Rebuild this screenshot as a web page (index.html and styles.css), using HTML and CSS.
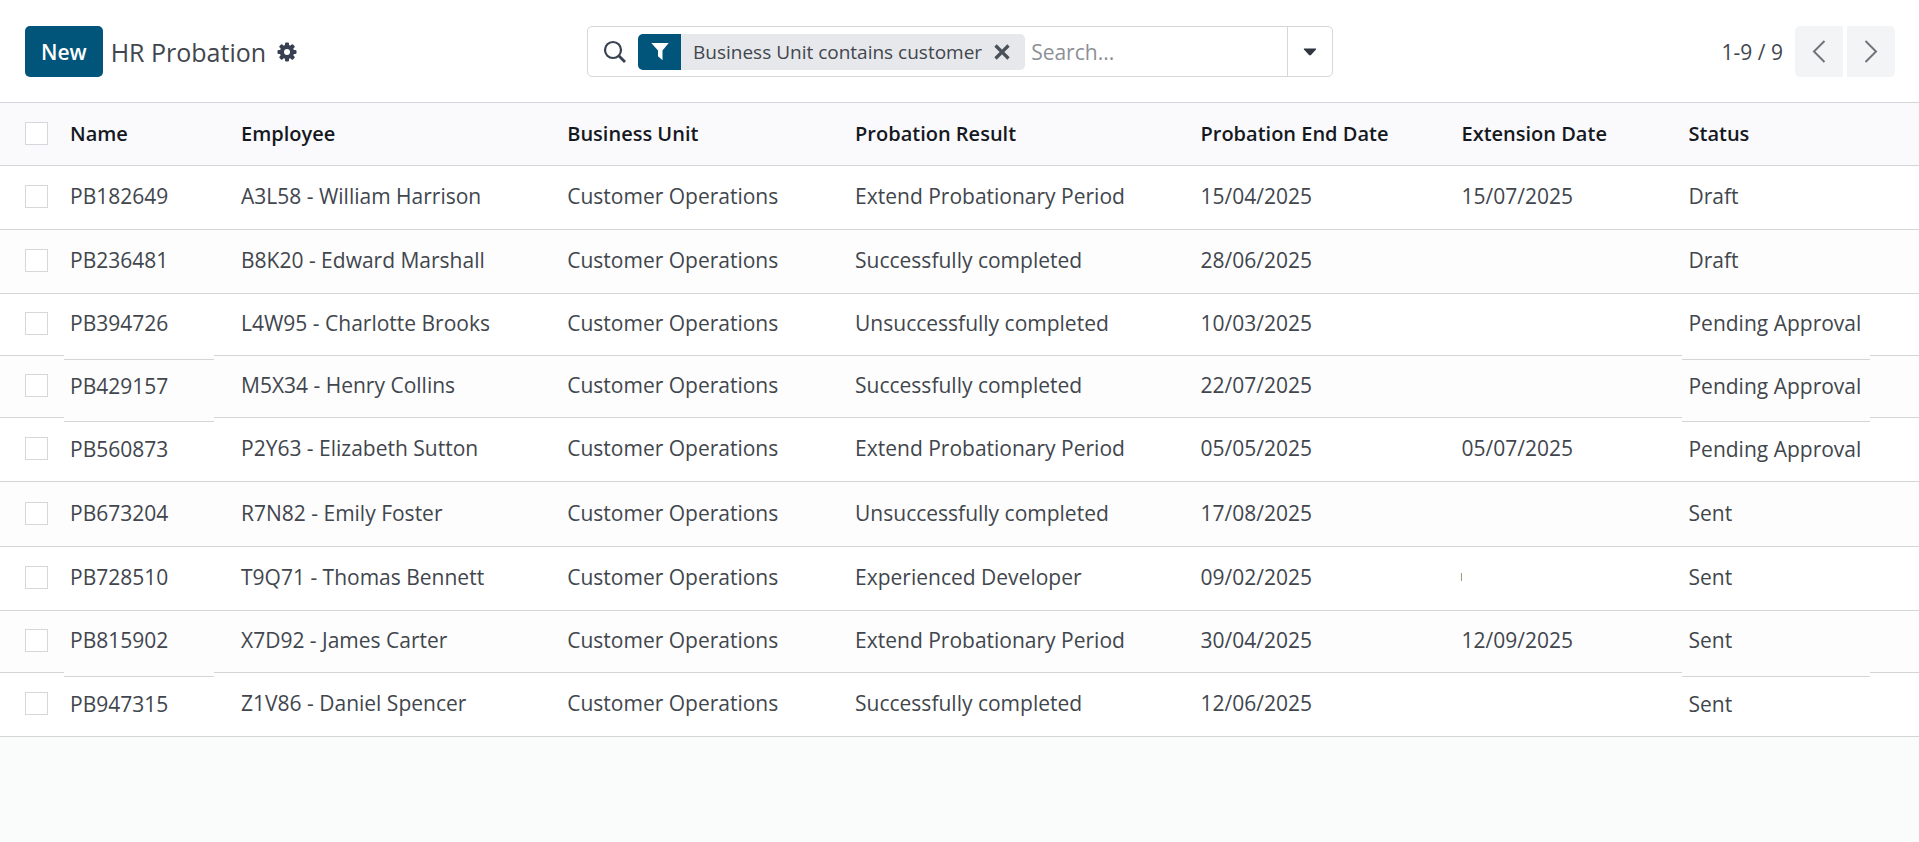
FILE: index.html
```html
<!DOCTYPE html>
<html lang="en">
<head>
<meta charset="utf-8">
<meta name="viewport" content="width=device-width, initial-scale=1">
<title>HR Probation</title>
<link rel="stylesheet" href="styles.css">
</head>
<body>
<header class="control-panel">
  <div class="breadcrumb">
    <button class="btn-new" type="button">New</button>
    <h1 class="title">HR Probation</h1>
    <button class="icon-btn" type="button" aria-label="Settings">
      <svg width="20" height="20" viewBox="0 0 20 20"><g fill="#374151"><rect x="8" y="0.5" width="4" height="19" rx="1"/><rect x="8" y="0.5" width="4" height="19" rx="1" transform="rotate(45 10 10)"/><rect x="8" y="0.5" width="4" height="19" rx="1" transform="rotate(90 10 10)"/><rect x="8" y="0.5" width="4" height="19" rx="1" transform="rotate(135 10 10)"/><circle cx="10" cy="10" r="7.2"/></g><circle cx="10" cy="10" r="3" fill="#fff"/></svg>
    </button>
  </div>
  <div class="search" role="search">
    <svg class="search-icon" width="24" height="24" viewBox="0 0 24 24" fill="none" stroke="#374151" stroke-width="2.2"><circle cx="10" cy="10" r="8"/><path d="M15.8 15.8 22 22" stroke-width="2.8"/></svg>
    <div class="facet">
      <span class="facet-icon"><svg width="18" height="19" viewBox="0 0 18 19"><path d="M0.3 1h17.4L11.5 8.6V18.2L7 14.2V8.6Z" fill="#fff"/></svg></span>
      <span class="facet-label">Business Unit contains customer</span>
      <button class="facet-remove" type="button" aria-label="Remove filter"><svg width="16" height="16" viewBox="0 0 16 16" stroke="#4b5159" stroke-width="3.2"><path d="M1.5 1.5 14.5 14.5M14.5 1.5 1.5 14.5"/></svg></button>
    </div>
    <input class="search-input" type="text" placeholder="Search..." aria-label="Search">
    <button class="search-toggle" type="button" aria-label="Search options"><svg width="14" height="8" viewBox="0 0 14 8"><path d="M1.4 0.5h11.2q1.2 0 .4 1L8 7q-1 .9-2 0L1 1.500q-.8-1 .4-1Z" fill="#2f3640"/></svg></button>
  </div>
  <nav class="pager" aria-label="Pager">
    <span class="pager-count">1-9 / 9</span>
    <button class="pager-btn prev" type="button" aria-label="Previous"><svg width="14" height="23" viewBox="0 0 14 23" fill="none" stroke="#707478" stroke-width="2"><path d="M12.500 1 2 11.500 12.500 22"/></svg></button>
    <button class="pager-btn next" type="button" aria-label="Next"><svg width="14" height="23" viewBox="0 0 14 23" fill="none" stroke="#707478" stroke-width="2"><path d="M1.500 1 12 11.500 1.500 22"/></svg></button>
  </nav>
</header>
<main>
<table class="list">
  <colgroup><col class="c-check"><col class="c-name"><col class="c-employee"><col class="c-unit"><col class="c-result"><col class="c-end"><col class="c-ext"><col class="c-status"></colgroup>
  <thead>
    <tr><th class="check"><input type="checkbox" aria-label="Select all"></th><th>Name</th><th>Employee</th><th>Business Unit</th><th>Probation Result</th><th>Probation End Date</th><th>Extension Date</th><th>Status</th></tr>
  </thead>
  <tbody>
    <tr><td class="check"><input type="checkbox" aria-label="Select PB182649"></td><td>PB182649</td><td>A3L58 - William Harrison</td><td>Customer Operations</td><td>Extend Probationary Period</td><td>15/04/2025</td><td>15/07/2025</td><td>Draft</td></tr>
    <tr><td class="check"><input type="checkbox" aria-label="Select PB236481"></td><td>PB236481</td><td>B8K20 - Edward Marshall</td><td>Customer Operations</td><td>Successfully completed</td><td>28/06/2025</td><td></td><td>Draft</td></tr>
    <tr class="short"><td class="check"><input type="checkbox" aria-label="Select PB394726"></td><td>PB394726</td><td>L4W95 - Charlotte Brooks</td><td>Customer Operations</td><td>Unsuccessfully completed</td><td>10/03/2025</td><td></td><td>Pending Approval</td></tr>
    <tr class="short"><td class="check"><input type="checkbox" aria-label="Select PB429157"></td><td class="low">PB429157</td><td>M5X34 - Henry Collins</td><td>Customer Operations</td><td>Successfully completed</td><td>22/07/2025</td><td></td><td class="low wide">Pending Approval</td></tr>
    <tr><td class="check"><input type="checkbox" aria-label="Select PB560873"></td><td class="low">PB560873</td><td>P2Y63 - Elizabeth Sutton</td><td>Customer Operations</td><td>Extend Probationary Period</td><td>05/05/2025</td><td>05/07/2025</td><td class="low wide">Pending Approval</td></tr>
    <tr class="tall"><td class="check"><input type="checkbox" aria-label="Select PB673204"></td><td>PB673204</td><td>R7N82 - Emily Foster</td><td>Customer Operations</td><td>Unsuccessfully completed</td><td>17/08/2025</td><td></td><td>Sent</td></tr>
    <tr><td class="check"><input type="checkbox" aria-label="Select PB728510"></td><td>PB728510</td><td>T9Q71 - Thomas Bennett</td><td>Customer Operations</td><td>Experienced Developer</td><td>09/02/2025</td><td><span class="mark"></span></td><td>Sent</td></tr>
    <tr class="short"><td class="check"><input type="checkbox" aria-label="Select PB815902"></td><td>PB815902</td><td>X7D92 - James Carter</td><td>Customer Operations</td><td>Extend Probationary Period</td><td>30/04/2025</td><td>12/09/2025</td><td>Sent</td></tr>
    <tr><td class="check"><input type="checkbox" aria-label="Select PB947315"></td><td class="low">PB947315</td><td>Z1V86 - Daniel Spencer</td><td>Customer Operations</td><td>Successfully completed</td><td>12/06/2025</td><td></td><td class="low wide">Sent</td></tr>
  </tbody>
</table>
</main>
</body>
</html>
```

FILE: styles.css
```css
* { box-sizing: border-box; }

body {
  margin: 0;
  background: #fafbfb;
  color: #41464d;
  font-family: "Open Sans", "Noto Sans", sans-serif;
  font-size: 21px;
  line-height: 28px;
}

button, input { font: inherit; color: inherit; margin: 0; }
button { border: 0; padding: 0; background: none; cursor: pointer; }
svg { display: block; flex: none; }

.control-panel {
  display: grid;
  grid-template-columns: 1fr minmax(0, 746px) 1fr;
  align-items: center;
  padding: 26px 24px 25px 25px;
  background: #fff;
}

.breadcrumb { display: flex; align-items: center; gap: 8px; }
.btn-new {
  height: 51px;
  padding: 0 16px;
  border-radius: 5px;
  background: #01557a;
  color: #fff;
  font-weight: 600;
}
.title { margin: 0; font-size: 25px; font-weight: 400; white-space: nowrap; }
.icon-btn { padding: 3px; }

.search {
  display: flex;
  align-items: center;
  height: 51px;
  padding-left: 15px;
  border: 1px solid #d5d7da;
  border-radius: 5px;
  background: #fff;
}
.facet {
  display: flex;
  align-items: center;
  height: 36px;
  margin-left: 11px;
  border-radius: 5px;
  overflow: hidden;
  background: #e7e8eb;
}
.facet-icon {
  display: flex;
  align-items: center;
  justify-content: center;
  width: 43px;
  height: 100%;
  background: #01557a;
}
.facet-label { padding: 0 12px; font-size: 19px; white-space: nowrap; }
.facet-remove { padding-right: 15px; }
.search-input {
  flex: 1;
  min-width: 0;
  height: 100%;
  padding: 0 6px;
  border: 0;
  outline: 0;
  background: none;
}
.search-input::placeholder { color: #8c9095; opacity: 1; }
.search-toggle {
  display: flex;
  align-items: center;
  justify-content: center;
  width: 45px;
  height: 100%;
  border-left: 1px solid #d5d7da;
}

.pager { display: flex; align-items: center; justify-content: flex-end; gap: 4px; }
.pager-count { margin-right: 8px; }
.pager-btn {
  display: flex;
  align-items: center;
  justify-content: center;
  width: 48px;
  height: 51px;
  background: #f3f4f5;
}
.prev { border-radius: 5px 0 0 5px; }
.next { border-radius: 0 5px 5px 0; }

.list {
  width: 100%;
  table-layout: fixed;
  border-collapse: separate;
  border-spacing: 0;
  border-top: 1px solid #d3d6d9;
}
.c-check { width: 64px; }
.c-name { width: 171px; }
.c-employee { width: 17%; }
.c-unit { width: 15%; }
.c-result { width: 18%; }
.c-end { width: 261px; }
.c-ext { width: 227px; }

.list th, .list td {
  position: relative;
  height: 64px;
  padding: 0 0 3px 6px;
  border-bottom: 1px solid #d3d6d9;
  text-align: left;
  vertical-align: middle;
  white-space: nowrap;
}
.list th {
  height: 63px;
  padding-bottom: 0;
  background: #fafafc;
  color: #15191f;
  font-size: 20px;
  font-weight: 600;
}
.list td { background: #fff; }
.list tr:nth-child(even) td { background: #fdfdfd; }
.list .short td { height: 62px; }
.list .tall td { height: 65px; }
.list .check { padding: 0 0 2px 25px; }
.check input {
  appearance: none;
  display: block;
  width: 23px;
  height: 23px;
  border: 1px solid #d5d7da;
  background: #fff;
}

/* Divider segment that drops below the row line in the name and status columns */
.list .low { padding-top: 2px; }
.low::before {
  content: "";
  position: absolute;
  top: -1px;
  left: 0;
  width: 150px;
  height: 4px;
  border-bottom: 1px solid #d3d6d9;
  background: #fdfdfd;
}
.low.wide::before { width: 188px; }

.mark { display: block; width: 1px; height: 8px; background: #a09a78; }
```
